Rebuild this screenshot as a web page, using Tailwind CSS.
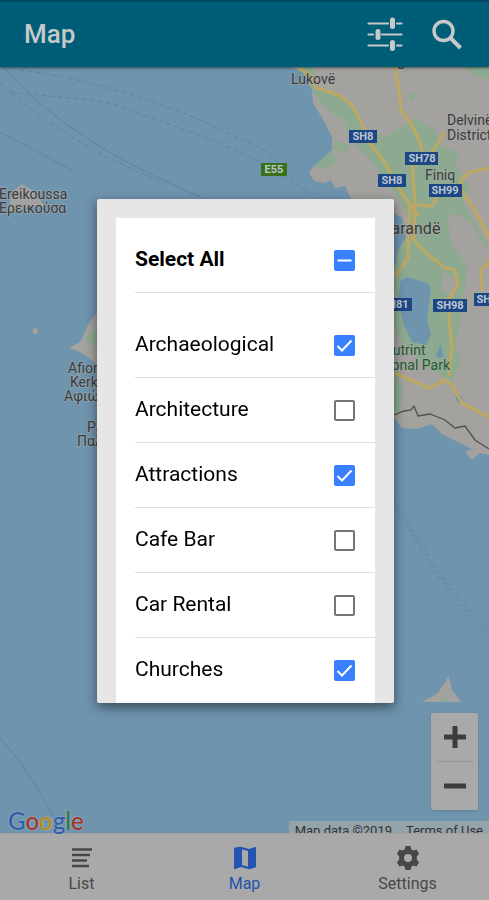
<!DOCTYPE html>
<html lang="en">
<head>
  <meta charset="UTF-8" />
  <meta name="viewport" content="width=device-width, initial-scale=1.0"/>
  <title>Map</title>
  <script src="https://cdn.jsdelivr.net/npm/@tailwindcss/browser@4"></script>
</head>
<body class="flex flex-col h-screen overflow-hidden bg-[#6f94ae] font-[Roboto,sans-serif]">

  <header class="relative z-10 flex items-center h-[67px] shrink-0 pl-6 pr-[26px] bg-[#005d78] border-t-2 border-[#00485e] text-[#c6c9ca] shadow-sm shadow-black/40">
    <h1 class="flex-1 text-[26px] font-medium">Map</h1>
    <button type="button" aria-label="Filter" class="mr-7">
      <svg class="w-9 h-9" viewBox="0 0 36 36" fill="none" stroke="currentColor" stroke-linecap="round">
        <path stroke-width="2.2" d="M1.5 6.500H21M30 6.500H34.500M1.5 17.500H6M15 17.500H34.500M1.5 28.500H21M30 28.500H34.500"/>
        <path stroke-width="5" d="M25.500 3V9.500M11 14.500V20.500M25.500 25.500V31.500"/>
      </svg>
    </button>
    <button type="button" aria-label="Search">
      <svg class="w-8 h-8" viewBox="0 0 32 32" fill="none" stroke="currentColor">
        <circle cx="12.5" cy="12" r="9.5" stroke-width="3.4"/>
        <path stroke-width="4" d="M19 18.500l10.5 10.5"/>
      </svg>
    </button>
  </header>

  <main class="relative flex-1 min-h-0">
    <svg class="absolute inset-0 w-full h-full" viewBox="0 67 489 766" preserveAspectRatio="xMidYMid slice" role="img" aria-label="Map of Corfu and Saranda">
      <rect y="67" width="489" height="766" fill="#6f94ae"/>

      <!-- ferry routes -->
      <g fill="none" stroke="#5d85a3" stroke-width="1">
        <path d="M5 69C60 130 130 168 215 203"/>
        <path stroke-dasharray="5 3" d="M0 83C50 130 110 160 165 184M20 70C90 78 170 105 215 127S270 150 278 163"/>
        <path stroke-dasharray="5 3" d="M10 92C60 98 100 98 125 108S220 140 265 165L315 195"/>
        <path d="M0 132L72 170"/>
        <path stroke-dasharray="4 3" d="M394 500C425 550 445 590 489 628M394 505C420 545 440 590 489 633"/>
        <path d="M0 738C20 760 36 785 54 817"/>
      </g>

      <!-- mainland -->
      <path fill="#a4a29f" d="M292 67L303 72L312 90L313 103L324 121L332 137V150L325 157L314 166L309 173L314 181L325 183L331 180L335 188L345 186L351 199L394 204V213L401 220L397 240L394 250V418L402 428L416 429L432 424L442 434L460 443L472 449L465 452L472 460L480 453L489 455V67Z"/>

      <!-- parks and valleys -->
      <g fill="#8daa90">
        <path d="M300 67H314L313 84L345 98L356 110L362 130L385 137L405 125L415 118L435 130L442 147L460 152L455 165L470 190L462 200L489 245V250L460 215L448 215L450 240L468 262L462 310L455 345L462 360L452 382L425 365L400 340L394 330V255L405 240L412 225L400 200L385 180L372 162L350 140L345 122L325 108L313 92Z"/>
        <path d="M408 95L420 90L412 102ZM465 67H489V80L475 76ZM314 166L330 152L340 160L325 170ZM335 140L350 145L345 152L334 150Z"/>
        <path d="M394 370L402 385L400 410L394 412Z"/>
      </g>
      <path fill="#a4a29f" d="M451 214L472 222L485 250V300L470 330L458 330L464 300L470 270L452 245Z"/>
      <path fill="#a4a29f" d="M443 272L456 280L455 298L441 290Z"/>

      <!-- lagoon and inlets -->
      <g fill="#6f94ae">
        <path d="M401 280L408 277L427 283L431 288L427 320L431 335L426 345L412 342L404 325L398 300Z"/>
        <path d="M436 355L441 344L443 357L438 358ZM455 395L462 396L463 404L457 402Z"/>
        <path d="M394 213L402 218L406 237L398 250L396 265H394Z"/>
      </g>

      <!-- roads -->
      <g fill="none" stroke="#bca862" stroke-width="3.2" stroke-linejoin="round" stroke-linecap="round">
        <path d="M300 69L312 76L315 87L340 96L352 105L360 120L370 143L385 163L400 190L410 205L418 215"/>
        <path d="M395 67L399 90L401 110L412 125L420 143L424 160"/>
        <path d="M489 168L470 172L461 180V190L475 210L489 238"/>
        <path d="M443 133L435 148L424 160L412 165L415 200L414 240"/>
        <path d="M414 205L432 206L440 192M410 205L408 240L408 258L396 275M412 238L425 252L445 268L455 270L458 285L449 298V320L452 345L449 375"/>
        <path d="M395 373L415 382L430 388L445 380L452 385L462 403L475 410L489 417M489 262L481 270L482 290"/>
      </g>
      <path fill="none" stroke="#51504f" stroke-width="1.3" d="M394 415L404 411L411 410L414 406L418 416L430 414L445 420L455 428L465 426L475 440L489 449"/>

      <!-- islands -->
      <g fill="#a4a29f">
        <path d="M12 192L22 184L35 192L45 207L30 206L8 214Z"/>
        <path d="M32 331L36 327L38 332L35 335Z"/>
        <path d="M100 308L88 325L80 342L69 348L80 352L98 365Z"/>
        <path d="M422 702L438 693L449 676L452 690L461 702Z"/>
      </g>
      <path fill="#8daa90" d="M100 325L85 338L92 345L100 350ZM440 702L444 697L449 702Z"/>

      <!-- place names -->
      <g font-size="14" fill="#3a3b3c" stroke="#a6a9a8" stroke-width="2" stroke-opacity=".55" paint-order="stroke" stroke-linejoin="round">
        <text x="291" y="84">Lukovë</text>
        <text x="397" y="66">g</text>
        <text x="447" y="125">Delvinë</text>
        <text x="447" y="140">District</text>
        <text x="425" y="180">Finiq</text>
        <text x="-1" y="199">Ereikoussa</text>
        <text x="-1" y="213">Ερεικούσα</text>
        <text x="68" y="373">Afionas</text>
        <text x="70" y="387">Kerkyra</text>
        <text x="64" y="401">Αφιώνας</text>
        <text x="87" y="432">Pal</text>
        <text x="77" y="446">Παλ</text>
        <text x="382" y="234" font-size="16">Sarandë</text>
        <g fill="#1d5c2b">
          <text x="384" y="355">Butrint</text>
          <text x="366" y="370">National Park</text>
        </g>
      </g>

      <!-- road shields -->
      <g font-size="11" font-weight="700" fill="#bcc6d2" text-anchor="middle">
        <rect x="349" y="130" width="28" height="13" fill="#1d4684"/><text x="363" y="140">SH8</text>
        <rect x="405" y="152" width="33" height="13" fill="#1d4684"/><text x="422" y="162">SH78</text>
        <rect x="378" y="174" width="28" height="13" fill="#1d4684"/><text x="392" y="184">SH8</text>
        <rect x="429" y="184" width="33" height="13" fill="#1d4684"/><text x="445" y="194">SH99</text>
        <rect x="379" y="298" width="33" height="13" fill="#1d4684"/><text x="395" y="308">SH81</text>
        <rect x="433" y="299" width="34" height="13" fill="#1d4684"/><text x="450" y="309">SH98</text>
        <rect x="474" y="293" width="33" height="13" fill="#1d4684"/><text x="490" y="303">SH98</text>
        <rect x="261" y="163" width="26" height="13" rx="1" fill="#387217"/><text x="274" y="173">E55</text>
      </g>
    </svg>

    <div class="absolute right-[11px] bottom-[23px] flex flex-col items-center w-[47px] rounded-xs bg-[#a9a9a9] text-[#3c3c3c] shadow-sm">
      <button type="button" aria-label="Zoom in" class="flex items-center justify-center w-full h-12">
        <svg class="w-6 h-6" viewBox="0 0 24 24" fill="none" stroke="currentColor" stroke-width="5"><path d="M1 12h22M12 1v22"/></svg>
      </button>
      <span class="w-9 h-px bg-[#969696]"></span>
      <button type="button" aria-label="Zoom out" class="flex items-center justify-center w-full h-12">
        <svg class="w-6 h-6" viewBox="0 0 24 24" fill="none" stroke="currentColor" stroke-width="5"><path d="M1 12h22"/></svg>
      </button>
    </div>

    <a href="#" aria-label="Google" class="absolute left-2 -bottom-1 text-2xl font-medium font-[Lato,sans-serif] text-shadow-[0_0_2px_#b4bcc4]"><span class="text-[#2f5cab]">G</span><span class="text-[#a53329]">o</span><span class="text-[#b58d10]">o</span><span class="text-[#2f5cab]">g</span><span class="text-[#2b7a3c]">l</span><span class="text-[#a53329]">e</span></a>

    <div class="absolute right-0 bottom-0 flex gap-3.5 h-3 px-1.5 overflow-hidden bg-[#94a2aa] text-[#333] text-[13px] leading-5 whitespace-nowrap">
      <span>Map data ©2019</span>
      <a href="#">Terms of Use</a>
    </div>
  </main>

  <nav class="grid grid-cols-3 h-[67px] shrink-0 border-t border-[#a3a3a3] bg-[#a9a9a9] text-[#474747] text-base">
    <a href="#" class="flex flex-col items-center gap-0.5 pt-3">
      <svg class="w-6 h-6" viewBox="0 0 24 24" fill="none" stroke="currentColor" stroke-width="2.6"><path d="M2 3.5h20M2 9h18M2 14.5h15M2 20h17"/></svg>
      List
    </a>
    <a href="#" aria-current="page" class="flex flex-col items-center gap-0.5 pt-3 text-[#2454b0]">
      <svg class="w-6 h-6" viewBox="0 0 24 24" fill="currentColor" fill-rule="evenodd"><path d="M1 2.6Q1 1.8 1.8 1.6L8 .8L16 3L22 1Q23 .8 23 1.6V20.500Q23 21.200 22.300 21.400L16 23.200L8 21L2 23Q1 23.200 1 22.400ZM9 3.400V19L15 20.700V5Z"/></svg>
      Map
    </a>
    <a href="#" class="flex flex-col items-center gap-0.5 pt-3">
      <svg class="w-6 h-6" viewBox="0 0 24 24" fill="currentColor"><path fill-rule="evenodd" d="M9.500 0h5l.8 3.300 2 1.100L20.600 3.400l2.500 4.400-2.300 2.600v3.200l2.300 2.600-2.500 4.400-3.300-1-2 1.100-.8 3.300h-5l-.8-3.300-2-1.100-3.300 1L.9 16.200l2.300-2.600v-3.200L.9 7.800l2.500-4.400 3.300 1 2-1.100ZM12 8a4 4 0 1 0 0 8a4 4 0 1 0 0-8Z"/></svg>
      Settings
    </a>
  </nav>

  <div class="fixed inset-0 z-20 flex items-center justify-center pt-0.5 pl-0.5">
    <div role="dialog" aria-label="Categories" class="w-[61%] max-w-sm h-[504px] overflow-hidden rounded-xs bg-[#e6e6e6] px-[19px] pt-[19px] text-[21px] text-black shadow-[0_4px_12px_rgba(0,0,0,0.5)]">
      <div class="bg-white h-full pl-[19px]">
        <div class="pt-2.5">
          <label class="flex items-center justify-between h-[65px] pr-5 border-b border-[#dedede] font-bold">
            Select All
            <span class="grid">
              <input id="select-all" type="checkbox" class="col-start-1 row-start-1 appearance-none w-[21px] h-[21px] rounded-xs border-2 border-[#757575] indeterminate:bg-[#3880ff] indeterminate:border-[#3880ff] checked:bg-[#3880ff] checked:border-[#3880ff]">
              <svg class="col-start-1 row-start-1 w-[21px] h-[21px] pointer-events-none" viewBox="0 0 21 21" fill="none" stroke="#fff" stroke-width="2"><path d="M3.500 10.500h14"/></svg>
            </span>
          </label>
        </div>
        <ul id="categories" class="pt-5"></ul>
      </div>
    </div>
  </div>

  <template id="category">
    <li class="group">
      <label class="flex items-center justify-between h-[65px] pr-5 border-b border-[#dedede] group-last:border-transparent">
        <span></span>
        <span class="grid">
          <input type="checkbox" class="peer col-start-1 row-start-1 appearance-none w-[21px] h-[21px] rounded-xs border-2 border-[#757575] checked:bg-[#3880ff] checked:border-[#3880ff]">
          <svg class="invisible peer-checked:visible col-start-1 row-start-1 w-[21px] h-[21px] pointer-events-none" viewBox="0 0 21 21" fill="none" stroke="#fff" stroke-width="2"><path d="M3.500 11l4.500 4.500L17.500 5.500"/></svg>
        </span>
      </label>
    </li>
  </template>

  <script>
    const categories = [
      ["Archaeological", true],
      ["Architecture", false],
      ["Attractions", true],
      ["Cafe Bar", false],
      ["Car Rental", false],
      ["Churches", true],
    ];
    const list = document.getElementById("categories");
    const template = document.getElementById("category");
    categories.forEach(([name, checked]) => {
      const item = template.content.cloneNode(true);
      item.querySelector("span").textContent = name;
      item.querySelector("input").checked = checked;
      list.appendChild(item);
    });

    const selectAll = document.getElementById("select-all");
    const boxes = [...list.querySelectorAll("input")];
    function updateSelectAll() {
      const count = boxes.filter((box) => box.checked).length;
      selectAll.checked = count === boxes.length;
      selectAll.indeterminate = count > 0 && count < boxes.length;
    }
    boxes.forEach((box) => box.addEventListener("change", updateSelectAll));
    selectAll.addEventListener("change", () => {
      boxes.forEach((box) => (box.checked = selectAll.checked));
    });
    updateSelectAll();
  </script>

</body>
</html>
